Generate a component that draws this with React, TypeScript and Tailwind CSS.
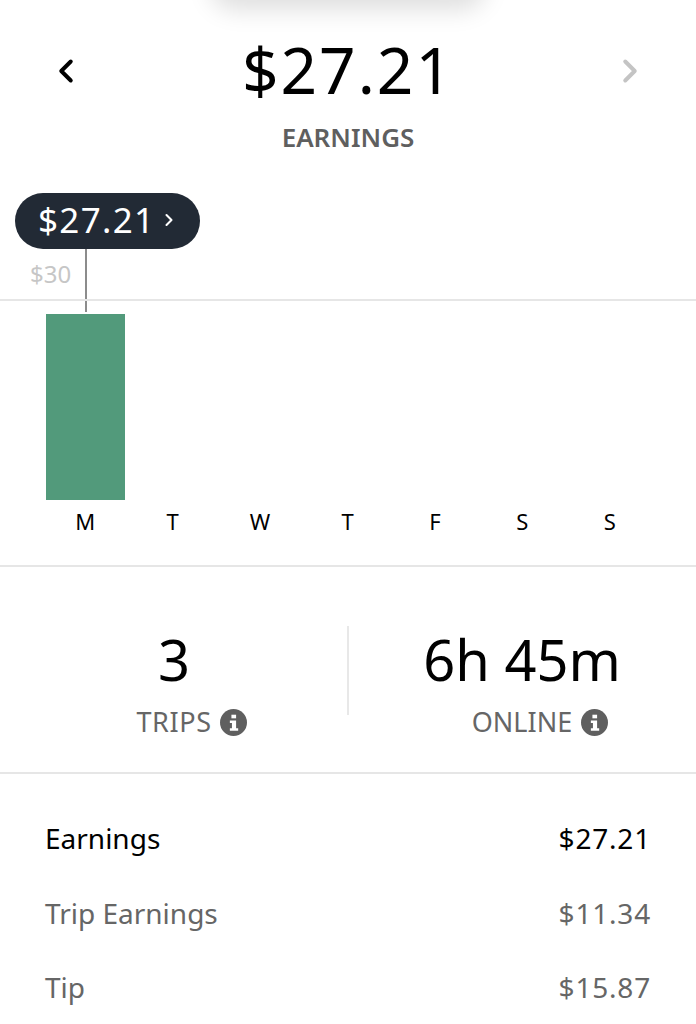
import { ChevronLeft, ChevronRight } from 'lucide-react';

const font = { fontFamily: '"Noto Sans", sans-serif' };
const days = ['M', 'T', 'W', 'T', 'F', 'S', 'S'];

function InfoDot() {
  return (
    <svg width="27" height="27" viewBox="0 0 26 26" className="shrink-0">
      <circle cx="13" cy="13" r="13" fill="#5f5f5f" />
      <rect x="11" y="5.5" width="4.5" height="3.5" fill="#fff" />
      <path d="M9.5 11h6v7.5h2V21h-8v-2.5h2V13.4h-2z" fill="#fff" />
    </svg>
  );
}

function Row({ label, value, dark }: { label: string; value: string; dark?: boolean }) {
  return (
    <div className={`flex justify-between items-center h-[74.5px] text-[28px] ${dark ? 'text-black' : 'text-[#666]'}`}>
      <span>{label}</span>
      <span className="tracking-[0.8px]">{value}</span>
    </div>
  );
}

export default function App() {
  return (
    <div style={font} className="relative w-[696px] h-[1024px] overflow-hidden bg-white">
      <div className="absolute left-[220px] -top-[30px] w-[256px] h-[30px] rounded-full bg-black/20 shadow-[0_0_24px_10px_rgba(0,0,0,0.13)]" />

      <div className="flex items-center justify-between h-[100px] pt-[41px] px-[47px]">
        <ChevronLeft size={38} strokeWidth={2.5} className="text-black" />
        <span className="text-[64px] leading-none tracking-[2px] text-black -translate-y-[1px]">$27.21</span>
        <ChevronRight size={38} strokeWidth={2.5} className="text-[#c4c4c4]" />
      </div>
      <div className="mt-[20px] text-center text-[26px] leading-[34px] font-semibold text-[#5f5f5f]">EARNINGS</div>

      <div className="relative mt-[39px] h-[372px]">
        <div className="absolute left-[15px] top-0 flex items-center h-[56px] w-[185px] pl-[23px] pb-[3px] rounded-full bg-[#222a35] text-white text-[35px] leading-none tracking-[1.3px]">
          $27.21
          <ChevronRight size={20} strokeWidth={2.5} className="ml-[4px]" />
        </div>
        <div className="absolute left-[85px] top-[56px] h-[63px] w-[2px] bg-[#8c8c8c]" />
        <div className="absolute left-[30px] top-[67px] text-[24px] leading-[28px] text-[#c6c6c6]">$30</div>
        <div className="absolute inset-x-0 top-[106px] h-[2px] bg-[#e6e6e6]" />
        <div className="absolute left-[46px] top-[121px] w-[79px] h-[186px] bg-[#529a7b]" />
        <div className="absolute left-[41.5px] top-[313px] grid grid-cols-7 w-[612px] text-center text-[22px] leading-[30px] text-black">
          {days.map((d, i) => (
            <span key={i}>{d}</span>
          ))}
        </div>
      </div>

      <div className="h-[2px] bg-[#e6e6e6]" />

      <div className="relative grid grid-cols-2 h-[205px] text-center">
        <div className="absolute left-[347px] top-[59px] w-[2px] h-[89px] bg-[#e8e8e8]" />
        <div className="pt-[57px]">
          <div className="text-[56px] leading-[70px] text-black">3</div>
          <div className="mt-[11px] pl-[35px] flex items-center justify-center gap-[8px] text-[27px] leading-[34px] text-[#666]">
            <span className="tracking-[0.6px]">TRIPS</span> <InfoDot />
          </div>
        </div>
        <div className="pt-[57px]">
          <div className="text-[56px] leading-[70px] text-black">6h 45m</div>
          <div className="mt-[11px] pl-[36px] flex items-center justify-center gap-[9px] text-[27px] leading-[34px] text-[#666]">
            ONLINE <InfoDot />
          </div>
        </div>
      </div>

      <div className="h-[2px] bg-[#e6e6e6]" />

      <div className="pt-[27px] pl-[45px] pr-[45px]">
        <Row label="Earnings" value="$27.21" dark />
        <Row label="Trip Earnings" value="$11.34" />
        <Row label="Tip" value="$15.87" />
      </div>
    </div>
  );
}
